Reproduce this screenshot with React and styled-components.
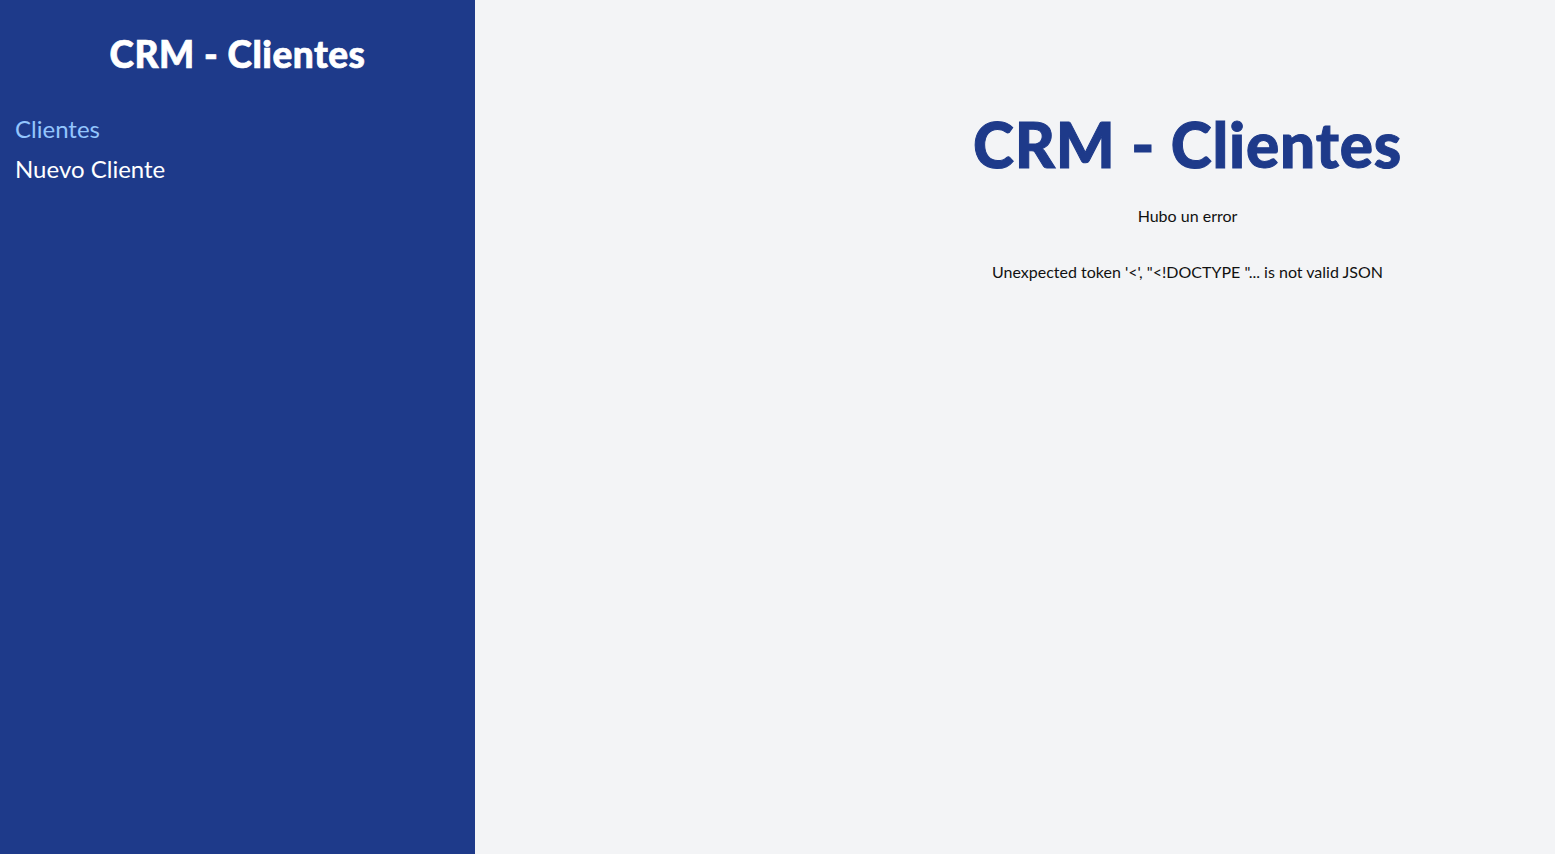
import * as React from 'react';
import styled, { createGlobalStyle } from 'styled-components';

const colors = {
  navy: '#1e3a8a',
  white: '#ffffff',
  activeLink: '#93c5fd',
  pageBg: '#f3f4f6',
  text: '#111111',
};

const GlobalStyle = createGlobalStyle`
  html, body, #root {
    margin: 0;
    padding: 0;
    height: 100%;
  }

  body {
    font-family: Lato, "Open Sans", "Noto Sans", sans-serif;
    background: ${colors.pageBg};
  }
`;

const Layout = styled.div`
  display: grid;
  grid-template-columns: 475px 1fr;
  min-height: 100vh;
`;

const Sidebar = styled.aside`
  background: ${colors.navy};
  padding: 34px 15px;
`;

// Lato has no black cut installed here, so a thin stroke thickens the bold
const SidebarTitle = styled.h2`
  margin: 0;
  font-size: 37px;
  line-height: 40px;
  font-weight: 900;
  letter-spacing: 0.5px;
  -webkit-text-stroke: 0.7px ${colors.white};
  color: ${colors.white};
  text-align: center;
`;

const Nav = styled.nav`
  display: flex;
  flex-direction: column;
  gap: 8px;
  margin-top: 39px;
`;

const NavLink = styled.a`
  display: block;
  font-size: 24px;
  line-height: 32px;
  text-decoration: none;
  color: ${(props) => (props.active ? colors.activeLink : colors.white)};
`;

const Main = styled.main`
  padding: 108px 0 40px 345px;
`;

const Title = styled.h1`
  margin: 0;
  font-size: 62px;
  line-height: 72px;
  font-weight: 900;
  letter-spacing: 0.85px;
  -webkit-text-stroke: 1px ${colors.navy};
  color: ${colors.navy};
  text-align: center;
`;

const Message = styled.p`
  margin: ${(props) => props.gap || 0}px 0 0;
  font-size: 16px;
  line-height: 24px;
  color: ${colors.text};
  text-align: center;
`;

const App = () => {
  return (
    <>
      <GlobalStyle />
      <Layout>
        <Sidebar>
          <SidebarTitle>CRM - Clientes</SidebarTitle>
          <Nav>
            <NavLink href="#" active>
              Clientes
            </NavLink>
            <NavLink href="#">Nuevo Cliente</NavLink>
          </Nav>
        </Sidebar>
        <Main>
          <Title>CRM - Clientes</Title>
          <Message gap={24}>Hubo un error</Message>
          <Message gap={32}>Unexpected token '&lt;', "&lt;!DOCTYPE "... is not valid JSON</Message>
        </Main>
      </Layout>
    </>
  );
};

export default App;
